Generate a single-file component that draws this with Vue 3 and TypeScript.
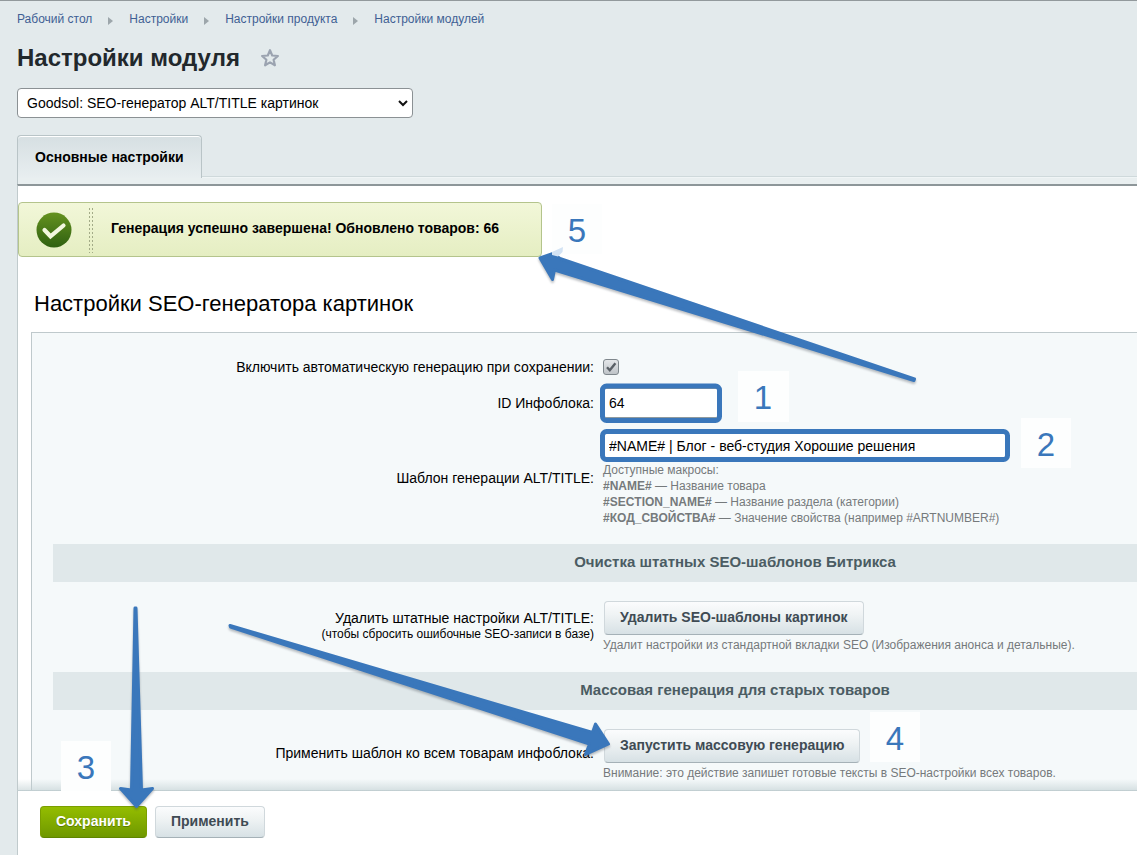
<script setup lang="ts">
import { ref } from 'vue'

interface Macro {
  code: string
  text: string
}
interface Badge {
  n: number
  x: number
  y: number
  size: number
}

const crumbs: string[] = ['Рабочий стол', 'Настройки', 'Настройки продукта', 'Настройки модулей']

const macros: Macro[] = [
  { code: '#NAME#', text: 'Название товара' },
  { code: '#SECTION_NAME#', text: 'Название раздела (категории)' },
  { code: '#КОД_СВОЙСТВА#', text: 'Значение свойства (например #ARTNUMBER#)' },
]

const badges: Badge[] = [
  { n: 1, x: 738, y: 371, size: 51 },
  { n: 2, x: 1021, y: 418, size: 50 },
  { n: 3, x: 61, y: 741, size: 50 },
  { n: 4, x: 870, y: 712, size: 50 },
  { n: 5, x: 552, y: 204, size: 50 },
]

const autoGenerate = ref(true)
const iblockId = ref('64')
const template = ref('#NAME# | Блог - веб-студия Хорошие решения')
</script>

<template>
  <div class="page">
    <header class="top">
      <nav class="crumbs">
        <template v-for="(c, i) in crumbs" :key="c">
          <svg v-if="i > 0" class="sep" width="5" height="8" viewBox="0 0 5 8"><path d="M0 0L5 4L0 8Z" fill="#9da6ab" /></svg>
          <a href="#">{{ c }}</a>
        </template>
      </nav>
      <div class="title-row">
        <h1>Настройки модуля</h1>
        <button class="star" type="button" aria-label="В избранное">
          <svg width="20" height="20" viewBox="0 0 20 20">
            <path d="M10 2.2L12.2 7.5L17.9 8L13.6 11.8L14.9 17.3L10 14.4L5.1 17.3L6.4 11.8L2.1 8L7.8 7.5Z" fill="none" stroke="#9ba3b0" stroke-width="2.2" stroke-linejoin="round" />
          </svg>
        </button>
      </div>
      <div class="module">
        <select aria-label="Модуль">
          <option>Goodsol: SEO-генератор ALT/TITLE картинок</option>
        </select>
        <svg class="chevron" width="10" height="7" viewBox="0 0 10 7"><path d="M1 1L5 5L9 1" fill="none" stroke="#111" stroke-width="2" /></svg>
      </div>
      <div class="tabs">
        <button class="tab" type="button">Основные настройки</button>
        <div class="tab-line"></div>
      </div>
      <div class="tab-strip"></div>
    </header>

    <main class="panel">
      <div class="message">
        <svg class="ok" width="36" height="36" viewBox="0 0 36 36">
          <defs>
            <linearGradient id="okFill" x1="0" y1="0" x2="0" y2="1">
              <stop offset="0" stop-color="#65921f" />
              <stop offset="1" stop-color="#2f6011" />
            </linearGradient>
          </defs>
          <circle cx="18" cy="18" r="17.5" fill="url(#okFill)" />
          <path d="M8.5 18L14.5 24.3L27.500 13.500" fill="none" stroke="#f3f7df" stroke-width="4.2" stroke-linecap="round" />
        </svg>
        <span class="dots"></span>
        <strong>Генерация успешно завершена! Обновлено товаров: 66</strong>
      </div>

      <h2>Настройки SEO-генератора картинок</h2>

      <form class="form" @submit.prevent>
        <div class="row row-check">
          <label for="auto">Включить автоматическую генерацию при сохранении:</label>
          <span class="check">
            <input id="auto" v-model="autoGenerate" type="checkbox" />
            <svg v-if="autoGenerate" width="16" height="16" viewBox="0 0 16 16"><path d="M4 8.2L6.8 11.2L12.4 4.2" fill="none" stroke="#5a6066" stroke-width="2.4" /></svg>
          </span>
        </div>
        <div class="row row-id">
          <label for="iblock">ID Инфоблока:</label>
          <input id="iblock" v-model="iblockId" class="text short" type="text" />
        </div>
        <div class="row row-template">
          <label for="tpl">Шаблон генерации ALT/TITLE:</label>
          <div>
            <input id="tpl" v-model="template" class="text long" type="text" />
            <p class="hint">Доступные макросы:</p>
            <p v-for="m in macros" :key="m.code" class="hint"><b>{{ m.code }}</b> — {{ m.text }}</p>
          </div>
        </div>
        <h3>Очистка штатных SEO-шаблонов Битрикса</h3>
        <div class="row row-action">
          <label for="clear">Удалить штатные настройки ALT/TITLE:<small>(чтобы сбросить ошибочные SEO-записи в базе)</small></label>
          <div>
            <button id="clear" class="btn tall" type="button">Удалить SEO-шаблоны картинок</button>
            <p class="hint">Удалит настройки из стандартной вкладки SEO (Изображения анонса и детальные).</p>
          </div>
        </div>
        <h3>Массовая генерация для старых товаров</h3>
        <div class="row row-action last">
          <label for="run">Применить шаблон ко всем товарам инфоблока:</label>
          <div>
            <button id="run" class="btn tall" type="button">Запустить массовую генерацию</button>
            <p class="hint">Внимание: это действие запишет готовые тексты в SEO-настройки всех товаров.</p>
          </div>
        </div>
      </form>
    </main>

    <footer class="actions">
      <button class="btn save" type="button">Сохранить</button>
      <button class="btn" type="button">Применить</button>
    </footer>

    <svg class="marks" width="1137" height="855" viewBox="0 0 1137 855">
      <g v-for="b in badges" :key="b.n">
        <rect :x="b.x" :y="b.y" :width="b.size" :height="b.size" fill="#fdfefe" />
        <text :x="b.x + 25" :y="b.y + 38" text-anchor="middle">{{ b.n }}</text>
      </g>
      <g fill="none" stroke="#3a77bb" stroke-width="5">
        <rect x="602.5" y="386" width="117" height="34.5" rx="4" />
        <rect x="602.5" y="431.5" width="405" height="28" rx="4" />
      </g>
      <g class="arrows" fill="#3a77bb" stroke="#3a77bb" stroke-width="3" stroke-linejoin="round">
        <path d="M540 258L553 253.500L560 258.500L914.500 379L914 380.500L554.500 270L552.500 279.500Z" />
        <path d="M230 625.500L230.500 627L589.500 744L585.500 754.500L608.500 744L595.500 724L592.500 732.500Z" />
        <path d="M135 608L136 608L141.500 790L152.500 788.500L136.500 806.500L120.500 788.500L131.500 790Z" />
      </g>
      <path d="M552 252L563 247L562.500 252L558 256.500L552 255Z" fill="#d3e3f4" />
    </svg>
  </div>
</template>

<style>
body {
  margin: 0;
}
</style>

<style scoped>
.page {
  position: relative;
  display: flex;
  flex-direction: column;
  min-height: 100vh;
  overflow: hidden;
  box-sizing: border-box;
  border-top: 1px solid #92999c;
  background: #e3eaec;
  color: #000;
  font: 14px/16px "Liberation Sans", Arial, sans-serif;
}
.page * {
  box-sizing: border-box;
}
button,
input,
select {
  font-family: inherit;
}
h1, h2, h3, p {
  margin: 0;
}
.top {
  padding-top: 10px;
}
.crumbs,
.title-row,
.module,
.tabs,
.tab-strip {
  margin-left: 17px;
}
.crumbs {
  display: flex;
  align-items: center;
  gap: 16px;
  height: 16px;
}
.crumbs a {
  color: #3f5f94;
  font-size: 12px;
  text-decoration: none;
}
.sep {
  margin-top: 3px;
}
.title-row {
  display: flex;
  align-items: center;
  gap: 20px;
  height: 30px;
  margin-top: 16px;
}
h1 {
  color: #22282c;
  font-size: 24px;
  line-height: 30px;
}
.star {
  display: flex;
  padding: 0;
  border: 0;
  background: none;
}
.module {
  position: relative;
  width: 396px;
  margin-top: 15px;
}
.module select {
  appearance: none;
  display: block;
  width: 100%;
  height: 30px;
  padding: 0 28px 0 9px;
  border: 1px solid #8b9194;
  border-radius: 4px;
  background: #fff;
  color: #000;
  font-size: 14px;
}
.chevron {
  position: absolute;
  right: 5px;
  top: 12px;
  pointer-events: none;
}
.tabs {
  display: flex;
  align-items: flex-end;
  margin-top: 17px;
}
.tab {
  height: 43px;
  padding: 0 17px;
  border: 1px solid #b9c4c7;
  border-bottom: 0;
  border-radius: 4px 4px 0 0;
  background: linear-gradient(#d6dfe2, #e8eef0);
  box-shadow: inset 0 1px #fff;
  color: #000;
  font-size: 14px;
  font-weight: bold;
}
.tab-line {
  flex: 1;
  height: 2px;
  border-top: 1px solid #cfd9db;
  background: #f0f5f6;
}
.tab-strip {
  height: 6px;
  border-left: 1px solid #b9c4c7;
  background: #e9eff0;
}
.panel {
  flex: 1;
  margin-left: 17px;
  padding-top: 16px;
  border-top: 2px solid #8d9699;
  border-left: 1px solid #c0cacc;
  background: #fff;
}
.message {
  display: flex;
  align-items: center;
  width: 524px;
  height: 55px;
  padding-left: 17px;
  border: 1px solid #b4c48c;
  border-radius: 4px;
  background: linear-gradient(#f2f7d9, #e5eec2);
}
.dots {
  width: 5px;
  height: 46px;
  margin: 0 18px 0 16px;
  background: radial-gradient(circle at 50% 50%, #a3ab87 1px, transparent 1px) 0 0 / 3px 4px;
}
.message strong {
  padding-bottom: 4px;
}
h2 {
  margin: 33px 0 0 16px;
  font-size: 22px;
  font-weight: normal;
  line-height: 28px;
}
/* The form keeps its full desktop width and runs past narrow windows. */
.form {
  min-width: 1407px;
  margin: 14px 0 0 13px;
  padding: 16px 21px 0;
  border: 1px solid #bfc9cc;
  border-right: 0;
  border-bottom: 0;
  background: #f5f9fa;
}
.row {
  display: grid;
  grid-template-columns: 541px 1fr;
  column-gap: 9px;
  align-items: center;
}
.row label {
  text-align: right;
}
.row-check {
  height: 36px;
}
.row-id {
  height: 36px;
}
.row-template {
  align-items: start;
  padding: 11px 0 18px;
}
.row-template label {
  padding-top: 38px;
}
.check {
  position: relative;
  width: 16px;
  height: 16px;
}
.check input {
  appearance: none;
  display: block;
  width: 16px;
  height: 16px;
  margin: 0;
  border: 1px solid #7f878c;
  border-radius: 3px;
  background: linear-gradient(#e4e7e9, #bfc4c8);
}
.check svg {
  position: absolute;
  inset: 0;
  pointer-events: none;
}
.text {
  display: block;
  padding: 0 5px;
  border: 1px solid #8f9a9e;
  border-radius: 3px;
  background: #fff;
  color: #000;
  font-size: 14px;
}
.short {
  width: 116px;
  height: 30px;
}
.long {
  width: 404px;
  height: 27px;
  margin-bottom: 3px;
}
.hint {
  color: #757a7c;
  font-size: 12px;
  line-height: 16px;
}
h3 {
  height: 38px;
  background: #e0e8ea;
  color: #4b5c63;
  font-size: 15px;
  line-height: 36px;
  text-align: center;
}
.row-action {
  align-items: start;
  height: 90px;
  padding-top: 19px;
}
.row-action label {
  padding-top: 9px;
}
.row-action small {
  display: block;
  font-size: 12px;
  line-height: 17px;
}
.row-action.last {
  height: 80px;
}
.last label {
  padding-top: 16px;
}
.btn {
  height: 32px;
  padding: 0 15px 3px;
  border: 1px solid #d0d8dc;
  border-bottom-color: #a5b1b7;
  border-radius: 4px;
  background: linear-gradient(#fbfcfd, #eff3f4 40%, #d7e1e5);
  color: #3f4b54;
  font-size: 14px;
  font-weight: bold;
}
.tall {
  display: block;
  height: 34px;
  margin: 0 0 2px 1px;
}
.save {
  border-color: #7a9e00;
  border-bottom-color: #5f8500;
  background: linear-gradient(#94bd00, #6f9800);
  color: #fff;
  text-shadow: 0 1px #5b7c00;
}
.actions {
  position: relative;
  display: flex;
  gap: 8px;
  height: 65px;
  margin-left: 17px;
  padding: 15px 22px 0;
  border-top: 1px solid #c6d0d3;
  border-left: 1px solid #c0cacc;
  background: #fff;
}
.actions::before {
  content: "";
  position: absolute;
  left: 0;
  right: 0;
  bottom: 100%;
  height: 12px;
  background: linear-gradient(rgba(190, 205, 208, 0), rgba(190, 205, 208, 0.6));
}
.marks {
  position: absolute;
  left: 0;
  top: -1px;
  pointer-events: none;
}
.marks text {
  fill: #3a77bb;
  font-size: 33px;
}
.arrows {
  filter: drop-shadow(0 2px 1px rgba(60, 70, 80, 0.35));
}
</style>
